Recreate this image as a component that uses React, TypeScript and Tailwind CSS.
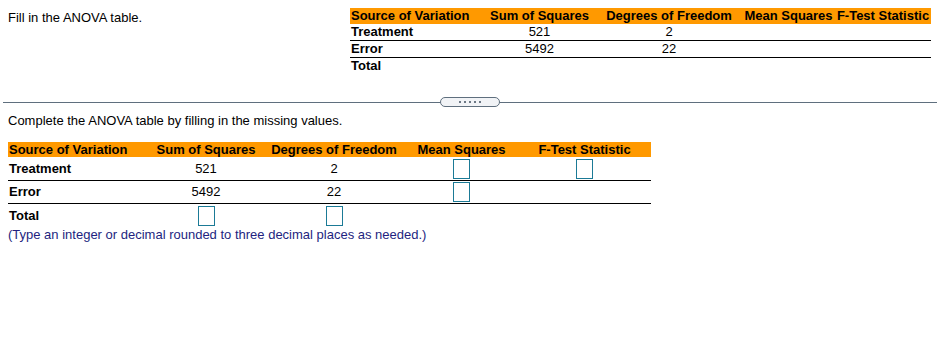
import React from "react";

const font = { fontFamily: '"Liberation Sans", Arial, sans-serif' };

function Box() {
  return <span className="inline-block w-[17px] h-[20px] border border-[#1b7a96] bg-white align-middle" />;
}

export default function App() {
  const topCols = "grid grid-cols-[133px_113px_146px_93px_96px]";
  const botCols = "grid grid-cols-[141px_114px_142px_113px_133px]";
  return (
    <div className="w-[947px] h-[358px] bg-white text-black" style={font}>
      {/* top section */}
      <div className="flex pt-[8px] h-[96px]">
        <div className="w-[350px] pl-[8px] text-[13px] leading-[15px] pt-[2px]">Fill in the ANOVA table.</div>
        <div className="w-[581px] text-[13px]">
          <div className={`${topCols} bg-[#ff9900] h-[16px] leading-[16px] font-bold`}>
            <div className="pl-[1px]">Source of Variation</div>
            <div className="text-center">Sum of Squares</div>
            <div className="text-center">Degrees of Freedom</div>
            <div className="text-center">Mean Squares</div>
            <div className="text-center whitespace-nowrap">F-Test Statistic</div>
          </div>
          <div className={`${topCols} h-[17px] leading-[16px] border-b border-black`}>
            <div className="pl-[1px] font-bold">Treatment</div>
            <div className="text-center">521</div>
            <div className="text-center">2</div>
            <div />
            <div />
          </div>
          <div className={`${topCols} h-[17px] leading-[16px] border-b border-black`}>
            <div className="pl-[1px] font-bold">Error</div>
            <div className="text-center">5492</div>
            <div className="text-center">22</div>
            <div />
            <div />
          </div>
          <div className={`${topCols} h-[16px] leading-[16px]`}>
            <div className="pl-[1px] font-bold">Total</div>
          </div>
        </div>
      </div>

      {/* divider */}
      <div className="relative h-[12px] flex items-center pl-[3px] pr-[10px]">
        <div className="w-full h-[1px] bg-[#5f6f7e]" />
        <div className="absolute left-[440px] top-[1px] w-[60px] h-[10px] rounded-full border border-[#5f6f7e] bg-[#f1f3f6] flex items-center justify-center gap-[3px]">
          {[0, 1, 2, 3, 4].map((i) => (
            <span key={i} className="w-[2px] h-[2px] bg-[#6b7785]" />
          ))}
        </div>
      </div>

      {/* bottom section */}
      <div className="px-[8px] pt-[5px]">
        <div className="text-[13px] leading-[15px]">Complete the ANOVA table by filling in the missing values.</div>
        <div className="w-[643px] mt-[14px] text-[13px]">
          <div className={`${botCols} bg-[#ff9900] h-[15px] leading-[15px] font-bold`}>
            <div className="pl-[1px]">Source of Variation</div>
            <div className="text-center">Sum of Squares</div>
            <div className="text-center">Degrees of Freedom</div>
            <div className="text-center">Mean Squares</div>
            <div className="text-center">F-Test Statistic</div>
          </div>
          <div className={`${botCols} h-[24px] items-center border-b border-black`}>
            <div className="pl-[1px] font-bold">Treatment</div>
            <div className="text-center">521</div>
            <div className="text-center">2</div>
            <div className="flex justify-center"><Box /></div>
            <div className="flex justify-center"><Box /></div>
          </div>
          <div className={`${botCols} h-[23px] items-center border-b border-black`}>
            <div className="pl-[1px] font-bold">Error</div>
            <div className="text-center">5492</div>
            <div className="text-center">22</div>
            <div className="flex justify-center"><Box /></div>
            <div />
          </div>
          <div className={`${botCols} h-[23px] items-center`}>
            <div className="pl-[1px] font-bold">Total</div>
            <div className="flex justify-center"><Box /></div>
            <div className="flex justify-center"><Box /></div>
            <div />
            <div />
          </div>
        </div>
        <div className="text-[13px] leading-[15px] text-[#231f80]">(Type an integer or decimal rounded to three decimal places as needed.)</div>
      </div>
    </div>
  );
}
